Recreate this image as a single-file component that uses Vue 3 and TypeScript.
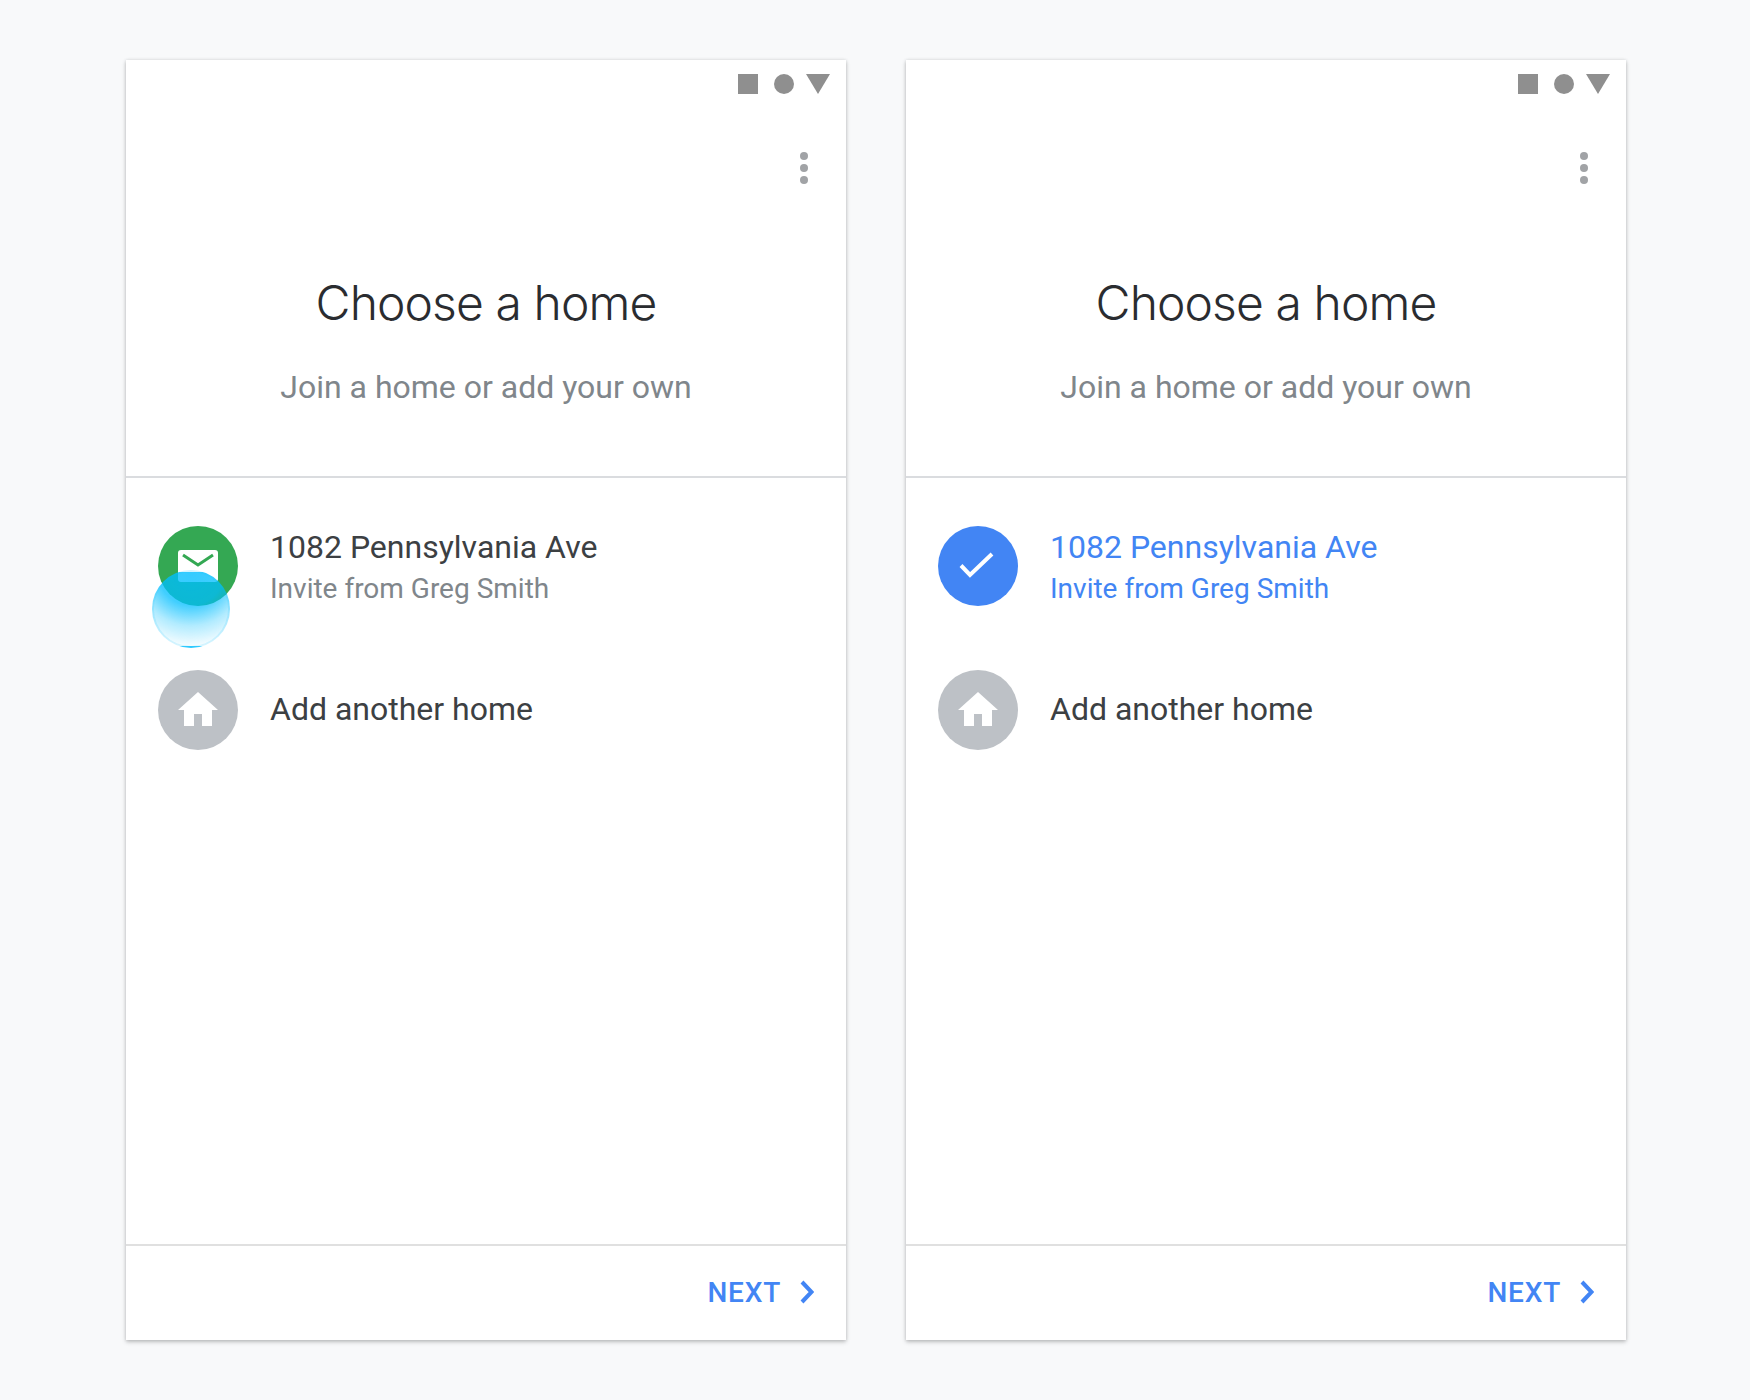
<script setup lang="ts">
interface Panel {
  id: number;
  selected: boolean;
}

const panels: Panel[] = [
  { id: 1, selected: false },
  { id: 2, selected: true },
];
</script>

<template>
  <div class="page">
    <div v-for="panel in panels" :key="panel.id" class="phone">
      <div class="top">
        <div class="status">
          <span class="st-square"></span>
          <span class="st-circle"></span>
          <svg class="st-tri" width="24" height="20" viewBox="0 0 24 20"><path d="M0 0H24L12 20Z" fill="#8f8f8f" /></svg>
        </div>
        <div class="menu">
          <span></span>
          <span></span>
          <span></span>
        </div>
        <h1 class="title">Choose a home</h1>
        <p class="subtitle">Join a home or add your own</p>
      </div>

      <div class="list">
        <div class="row first" :class="{ selected: panel.selected }">
          <div class="avatar" :class="panel.selected ? 'blue' : 'green'">
            <svg v-if="panel.selected" width="80" height="80" viewBox="0 0 80 80">
              <path d="M23 39.5L32 49L54 28" fill="none" stroke="#fff" stroke-width="4" />
            </svg>
            <svg v-else width="80" height="80" viewBox="0 0 80 80">
              <rect x="20" y="24" width="40" height="32" rx="3" fill="#fff" />
              <path d="M25 29L40 39L55 29" fill="none" stroke="#34a853" stroke-width="3" />
            </svg>
            <span v-if="!panel.selected" class="ripple"></span>
          </div>
          <div class="row-text">
            <div class="row-title">1082 Pennsylvania Ave</div>
            <div class="row-sub">Invite from Greg Smith</div>
          </div>
        </div>
        <div class="row">
          <div class="avatar gray">
            <svg width="80" height="80" viewBox="0 0 80 80">
              <path d="M40 22L60 40H54V56H44V44H36V56H26V40H20Z" fill="#fff" />
            </svg>
          </div>
          <div class="row-text">
            <div class="row-title">Add another home</div>
          </div>
        </div>
      </div>

      <div class="footer">
        <span class="next">NEXT</span>
        <svg width="14" height="24" viewBox="0 0 14 24"><path d="M2 2L11.5 12L2 22" fill="none" stroke="#4285f4" stroke-width="4" /></svg>
      </div>
    </div>
  </div>
</template>

<style>
html, body { background: #f8f9fa; }
</style>

<style scoped>
.page { display: flex; gap: 60px; padding: 60px 0 60px 126px; background: #f8f9fa; font-family: Roboto, sans-serif; }
.phone { width: 720px; height: 1280px; background: #fff; display: flex; flex-direction: column; box-shadow: 0 2px 4px rgba(60, 64, 67, 0.3), 0 0 3px rgba(60, 64, 67, 0.15); }
.top { height: 418px; flex: none; border-bottom: 2px solid #dadcdf; box-sizing: border-box; display: flex; flex-direction: column; align-items: center; padding: 14px 16px 0; }
.status { align-self: flex-end; display: flex; align-items: center; height: 20px; }
.st-square { width: 20px; height: 20px; background: #8f8f8f; margin-right: 16px; }
.st-circle { width: 20px; height: 20px; border-radius: 50%; background: #8f8f8f; margin-right: 12px; }
.menu { align-self: flex-end; display: flex; flex-direction: column; gap: 4px; margin: 58px 22px 0 0; }
.menu span { width: 8px; height: 8px; border-radius: 50%; background: #a1a3a6; }
.title { margin: 87px 0 0; font-family: Inter, sans-serif; font-weight: 300; font-size: 48px; line-height: 64px; letter-spacing: -0.9px; color: #2a2c30; }
.subtitle { margin: 32px 0 0; font-size: 32px; line-height: 40px; color: #80868b; }
.list { flex: 1; padding: 48px 32px 0; display: flex; flex-direction: column; gap: 64px; }
.row { display: flex; align-items: center; gap: 32px; height: 80px; }
.avatar { width: 80px; height: 80px; flex: none; border-radius: 50%; position: relative; }
.avatar svg { display: block; }
.green { background: #34a853; }
.blue { background: #4285f4; }
.gray { background: #bdc1c6; }
.ripple { position: absolute; left: -6px; top: 44px; width: 78px; height: 78px; box-sizing: border-box; border-radius: 50%; border: 2px solid rgba(0, 190, 255, 0.14); background: radial-gradient(circle at 50% 0, rgba(0, 190, 255, 0.8) 0, rgba(0, 190, 255, 0.75) 40%, rgba(0, 190, 255, 0.3) 65%, rgba(0, 190, 255, 0.03) 90%); }
.row-text { padding-bottom: 2px; }
.first .row-text { padding: 2px 0 0; }
.row-title { font-size: 32px; line-height: 40px; color: #3c4043; }
.row-sub { font-size: 28px; line-height: 36px; margin-top: 4px; color: #80868b; }
.selected .row-title, .selected .row-sub { color: #4285f4; }
.footer { height: 96px; flex: none; border-top: 2px solid #e0e0e0; box-sizing: border-box; display: flex; align-items: center; justify-content: flex-end; gap: 19px; padding: 0 32px 2px 0; }
.next { font-size: 28px; font-weight: 500; letter-spacing: 0.8px; color: #4285f4; }
</style>
